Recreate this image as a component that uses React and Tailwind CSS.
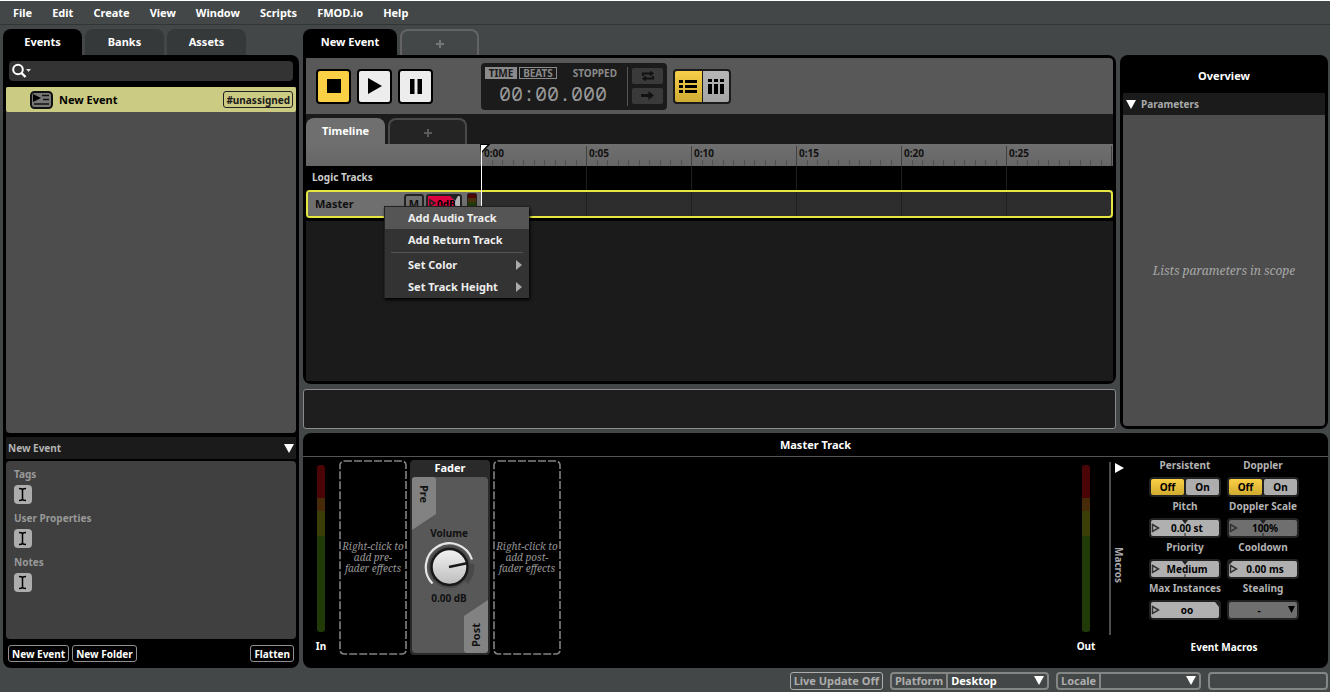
import React from "react";

const MENUS = ["File", "Edit", "Create", "View", "Window", "Scripts", "FMOD.io", "Help"];
const TIMES = ["0:00", "0:05", "0:10", "0:15", "0:20", "0:25"];

function Down({ className = "" }) {
  return (
    <svg className={"pointer-events-none h-[9px] w-[10px] shrink-0 " + className} viewBox="0 0 10 9" aria-hidden="true">
      <path d="M0 0H10L5 9Z" fill="currentColor" />
    </svg>
  );
}

function SideTab({ children, active }) {
  return (
    <button
      type="button"
      className={
        "h-[26px] w-[79px] rounded-t-[8px] text-[11px] leading-[16px] font-bold text-white " +
        (active ? "bg-black" : "bg-[#353939]")
      }
    >
      {children}
    </button>
  );
}

function PlusTab({ className }) {
  return (
    <button
      type="button"
      aria-label="Add tab"
      className={"flex h-[26px] w-[79px] items-center justify-center rounded-t-[8px] border-2 border-b-0 pt-[2px] " + className}
    >
      <svg className="h-2 w-2" viewBox="0 0 8 8">
        <path d="M4 0V8M0 4H8" stroke="currentColor" strokeWidth="2" />
      </svg>
    </button>
  );
}

function Browser() {
  return (
    <aside className="flex w-[296px] shrink-0 flex-col">
      <div className="flex gap-[3px]">
        <SideTab active>Events</SideTab>
        <SideTab>Banks</SideTab>
        <SideTab>Assets</SideTab>
      </div>
      <div className="flex min-h-0 flex-1 flex-col rounded-[8px] rounded-tl-none bg-black px-[3px]">
        <label className="mx-[3px] mt-[6px] flex h-5 shrink-0 items-center rounded-[4px] bg-[#333333] pl-[3px]">
          <svg className="h-4 w-5 shrink-0" viewBox="0 0 20 16" aria-hidden="true">
            <circle cx="6" cy="6.5" r="4.8" fill="none" stroke="#fff" strokeWidth="2" />
            <path d="M9.5 10L13.5 14" stroke="#fff" strokeWidth="2.4" />
            <path d="M14 6H19L16.5 9Z" fill="#ddd" />
          </svg>
          <input type="text" aria-label="Search events" className="min-w-0 flex-1 bg-transparent text-[11px] text-white outline-none" />
        </label>
        <div className="mt-[6px] min-h-0 flex-1 overflow-hidden rounded-b-[4px] bg-[#4d4d4d]">
          <div className="flex h-[25px] items-center rounded-[2px] bg-[#cccb83] pr-[3px] pl-6 text-black">
            <svg className="h-[18px] w-[23px]" viewBox="0 0 23 18" aria-hidden="true">
              <rect x="1" y="1" width="21" height="16" rx="3.5" fill="#777" stroke="#111" strokeWidth="2" />
              <path d="M3 3L11 7L3 11Z" fill="#000" />
              <path d="M12 4.5H19M13 8.5H19M4 13H19" stroke="#111" strokeWidth="1.5" />
            </svg>
            <span className="ml-[6px] flex-1 text-[11px] leading-[16px] font-bold">New Event</span>
            <span className="flex h-[17px] items-center rounded-[3px] border border-[#222] px-[2px] text-[10px] leading-[14px] font-bold text-[#1a1a1a]">
              #unassigned
            </span>
          </div>
        </div>
        <button type="button" className="mt-1 flex h-[22px] shrink-0 items-center justify-between bg-[#1b1b1b] px-[2px] text-[10px] leading-[14px] font-bold text-[#b3b3b3]">
          New Event
          <Down className="text-white" />
        </button>
        <div className="mt-[2px] flex h-[178px] shrink-0 flex-col rounded-[4px] bg-[#404040] px-2 pt-[6px]">
          {["Tags", "User Properties", "Notes"].map((name) => (
            <div key={name} className="flex h-11 flex-col items-start gap-1">
              <label htmlFor={name} className="text-[10px] leading-[14px] font-bold text-[#999999]">
                {name}
              </label>
              <button id={name} type="button" aria-label={"Edit " + name} className="h-[19px] w-[18px] rounded-[4px] bg-[#adadad]">
                <svg viewBox="0 0 18 19" aria-hidden="true">
                  <path d="M5 3.5C7 3.5 8.5 4 8.5 5V14C8.5 15 7 15.5 5 15.5M12 3.5C10 3.5 8.5 4 8.5 5V14C8.5 15 10 15.5 12 15.5" fill="none" stroke="#000" strokeWidth="1.5" />
                </svg>
              </button>
            </div>
          ))}
        </div>
        <div className="flex h-[29px] shrink-0 items-center gap-[3px] px-[2px]">
          <FootButton>New Event</FootButton>
          <FootButton>New Folder</FootButton>
          <span className="flex-1" />
          <FootButton>Flatten</FootButton>
        </div>
      </div>
    </aside>
  );
}

function FootButton({ children }) {
  return (
    <button type="button" className="h-[17px] rounded-[3px] border border-[#909090] px-[3px] text-[10px] leading-[14px] font-bold text-white">
      {children}
    </button>
  );
}

function Transport() {
  const key = "flex size-[35px] items-center justify-center rounded-[4px] border-2 border-black ";
  return (
    <div className="flex h-[56px] shrink-0 items-center rounded-tr-[4px] bg-[#585858] pl-[10px]">
      <div className="flex gap-[6px]">
        <button type="button" aria-label="Stop" className={key + "bg-[#fbd045]"}>
          <svg className="size-[14px]" viewBox="0 0 14 14"><path d="M0 0H14V14H0Z" /></svg>
        </button>
        <button type="button" aria-label="Play" className={key + "bg-[#ededed]"}>
          <svg className="h-4 w-[14px]" viewBox="0 0 14 16"><path d="M0 0L14 8L0 16Z" /></svg>
        </button>
        <button type="button" aria-label="Pause" className={key + "bg-[#ededed]"}>
          <svg className="h-[15px] w-3" viewBox="0 0 12 15"><path d="M0 0H4.5V15H0ZM7.5 0H12V15H7.5Z" /></svg>
        </button>
      </div>
      <div className="ml-12 flex h-[47px] w-[186px] shrink-0 rounded-[4px] bg-[#1b1b1b] p-1">
        <div className="flex w-[142px] flex-col">
          <div className="flex items-center gap-[2px] text-[10px] leading-[10px] font-bold text-[#8a8a8a]">
            <button type="button" className="h-3 w-8 border border-[#8a8a8a] bg-[#8a8a8a] text-[#1b1b1b]">TIME</button>
            <button type="button" className="h-3 w-[38px] border border-[#8a8a8a]">BEATS</button>
            <span className="ml-auto pr-[10px]">STOPPED</span>
          </div>
          <output className="mt-[3px] pl-[14px] font-['Noto_Sans_Mono','Liberation_Mono',monospace] text-[20px] leading-[24px] text-[#999999]">00:00.000</output>
        </div>
        <div className="flex w-9 flex-col gap-1 border-l border-[#555] py-px pl-1 text-[#111]">
          <button type="button" aria-label="Loop playback" className="flex h-4 w-[31px] items-center justify-center rounded-[2px] bg-[#3a3a3a]">
            <svg className="h-3 w-3" viewBox="0 0 12 12">
              <path d="M1 6V3.5H9M11 6V8.5H3" fill="none" stroke="currentColor" strokeWidth="2" />
              <path d="M8 0.5L12 3.5L8 6.5ZM4 5.5L0 8.5L4 11.5Z" fill="currentColor" />
            </svg>
          </button>
          <button type="button" aria-label="Follow playhead" className="flex h-4 w-[31px] items-center justify-center rounded-[2px] bg-[#3a3a3a]">
            <svg className="h-[9px] w-[13px]" viewBox="0 0 13 9"><path d="M0 3H7.5V0L13 4.5L7.5 9V6H0Z" fill="currentColor" /></svg>
          </button>
        </div>
      </div>
      <div className="ml-[6px] flex h-[35px] w-[58px] shrink-0 gap-px rounded-[4px] bg-[#1b1b1b] p-[2px]">
        <button type="button" aria-label="List view" className="flex flex-1 items-center justify-center rounded-l-[2px] bg-linear-to-b from-[#f8cf49] to-[#cfac33]">
          <svg className="h-[13px] w-[18px]" viewBox="0 0 18 13">
            <path d="M0 0H4V3H0ZM6 0H18V3H6ZM0 5H4V8H0ZM6 5H18V8H6ZM0 10H4V13H0ZM6 10H18V13H6Z" />
          </svg>
        </button>
        <button type="button" aria-label="Mixer view" className="flex flex-1 items-center justify-center rounded-r-[2px] bg-linear-to-b from-[#b5b5b5] to-[#a5a5a5]">
          <svg className="h-[15px] w-4" viewBox="0 0 16 15">
            <path d="M0 0H4V3H0ZM6 0H10V3H6ZM12 0H16V3H12ZM0 5H4V15H0ZM6 5H10V15H6ZM12 5H16V15H12Z" />
          </svg>
        </button>
      </div>
    </div>
  );
}

function Cells({ className }) {
  return (
    <div className="flex min-w-0 flex-1 overflow-hidden">
      {TIMES.map((t) => (
        <span key={t} className={"w-[105px] shrink-0 border-l " + className} />
      ))}
    </div>
  );
}

function MenuItem({ children, active, submenu }) {
  return (
    <button
      type="button"
      role="menuitem"
      className={
        "flex h-[22px] w-full items-center justify-between pr-[7px] pl-[23px] text-[11px] leading-[16px] font-bold text-[#eeeeee] " +
        (active ? "bg-[#555555]" : "")
      }
    >
      {children}
      {submenu && (
        <svg className="h-[10px] w-[6px]" viewBox="0 0 6 10" aria-hidden="true"><path d="M0 0L6 5L0 10Z" fill="#aaa" /></svg>
      )}
    </button>
  );
}

function Timeline() {
  return (
    <div className="relative flex min-h-0 flex-1 flex-col bg-[#1b1b1b]">
      <div className="mt-1 flex gap-[3px]">
        <button type="button" className="h-[26px] w-[79px] rounded-t-[8px] bg-[#6f6f6f] text-[11px] leading-[16px] font-bold text-white">Timeline</button>
        <PlusTab className="border-[#4a4a4a] bg-[#242424] text-[#5a5a5a]" />
      </div>
      <div className="flex h-[22px] bg-linear-to-b from-[#6f6f6f] to-[#666666]">
        <div className="w-[175px] shrink-0" />
        <div className="flex min-w-0 flex-1 overflow-hidden pt-[2px]">
          {TIMES.map((t) => (
            <div key={t} className="flex w-[105px] shrink-0 flex-col border-l border-[#404040]">
              <span className="pl-[2px] text-[10px] leading-[14px] font-bold text-[#111]">{t}</span>
              <svg className="h-[6px] w-[104px]" viewBox="0 0 104 6" aria-hidden="true">
                <path d="M10.5 0V6M20.5 0V6M31.5 0V6M41.5 0V6M52.5 0V6M62.5 0V6M73.5 0V6M83.5 0V6M94.5 0V6" stroke="#505050" />
              </svg>
            </div>
          ))}
          <div className="flex-1 border-l border-[#404040]" />
        </div>
      </div>
      <div className="flex h-6 bg-black">
        <div className="w-[175px] shrink-0 pl-[6px] text-[10px] leading-[22px] font-bold text-[#cccccc]">Logic Tracks</div>
        <Cells className="border-[#1e1e1e]" />
      </div>
      <div className="relative flex h-7 rounded-[4px] border-2 border-[#e6e640] bg-[#2d2d2d]">
        <div className="flex w-[173px] shrink-0 rounded-l-[3px] bg-[#6f6f6f] pl-[7px]">
          <span className="w-[89px] text-[11px] leading-[24px] font-bold text-[#111]">Master</span>
          <button type="button" aria-label="Mute" className="mt-[2px] h-5 w-5 rounded-[3px] border-2 border-[#222] bg-[#6f6f6f] text-[11px] leading-[16px] font-bold text-[#111]">M</button>
          <div className="relative mt-[2px] ml-[2px] h-5 w-9 overflow-hidden rounded-[3px] border-2 border-[#222] bg-[#b5b5b5]">
            <svg className="absolute inset-0 h-4 w-8" viewBox="0 0 32 16" aria-hidden="true">
              <path d="M0 0H23L27 6V16H0Z" fill="#dc0140" />
              <path d="M22 0H30L27 5Z" fill="#222" />
              <path d="M2 4L7 7L2 10Z" fill="none" stroke="#222" strokeWidth="1.5" />
            </svg>
            <input aria-label="Track volume" defaultValue="0dB" className="relative block h-4 w-full bg-transparent pl-[9px] text-[10px] leading-[16px] font-bold text-black outline-none" />
          </div>
          <div className="mt-px ml-[5px] flex h-[22px] w-[10px] flex-col rounded-[2px] border border-[#222]">
            <span className="h-1 bg-[#4b0507]" />
            <span className="h-1 bg-[#47300a]" />
            <span className="flex-1 bg-[#203a0a]" />
          </div>
        </div>
        <Cells className="border-[#202020]" />
        <div role="menu" className="absolute top-[14px] left-[76px] z-10 w-[145px] border-t border-l border-[#222] bg-[#333333] shadow-[1px_2px_3px_#000]">
          <MenuItem active>Add Audio Track</MenuItem>
          <MenuItem>Add Return Track</MenuItem>
          <div className="mx-[6px] my-px h-px bg-[#555]" />
          <MenuItem submenu>Set Color</MenuItem>
          <MenuItem submenu>Set Track Height</MenuItem>
        </div>
      </div>
      <div className="h-[3px] bg-black" />
      <svg className="pointer-events-none absolute top-[30px] left-[174px] h-[62px] w-[12px]" viewBox="0 0 12 62" aria-hidden="true">
        <path d="M0 0H10.5L1 10Z" fill="#000" />
        <path d="M1 1H7.5L1 8Z" fill="#fff" />
        <path d="M1.5 1V62" stroke="#fff" />
      </svg>
    </div>
  );
}

function Overview() {
  return (
    <section className="mt-[26px] flex w-[208px] shrink-0 flex-col rounded-[8px] bg-black p-[3px] pt-0">
      <h2 className="h-[38px] pt-[2px] text-center text-[11px] leading-[38px] font-bold text-white">Overview</h2>
      <button type="button" className="flex h-[22px] shrink-0 items-center gap-[5px] bg-[#1b1b1b] px-[3px] text-[10px] leading-[14px] font-bold text-[#aaaaaa]">
        <Down className="text-white" />
        Parameters
      </button>
      <div className="flex flex-1 items-center justify-center rounded-b-[4px] bg-[#4d4d4d] font-['Noto_Serif','DejaVu_Serif_Condensed','DejaVu_Serif',serif] text-[12px] leading-[16px] text-[#a8a8a8] italic">
        Lists parameters in scope
      </div>
    </section>
  );
}

function Meter({ label }) {
  return (
    <div className="flex w-6 shrink-0 flex-col items-center pt-2">
      <div className="flex h-[167px] w-2 flex-col overflow-hidden rounded-[3px]">
        <span className="h-[33px] bg-[#4b0507]" />
        <span className="h-[13px] bg-[#472a08]" />
        <span className="h-[25px] bg-[#3c3e08]" />
        <span className="flex-1 bg-[#203a08]" />
      </div>
      <span className="mt-[7px] text-[10px] leading-[14px] font-bold text-white">{label}</span>
    </div>
  );
}

function DropZone({ children }) {
  return (
    <div className="relative mt-[3px] flex h-[195px] w-[68px] shrink-0 items-center justify-center text-center font-['Noto_Serif','DejaVu_Serif_Condensed','DejaVu_Serif',serif] text-[10px] leading-[11px] text-[#949494] italic">
      <svg className="absolute inset-0 h-full w-full" viewBox="0 0 68 195" aria-hidden="true">
        <rect x="1" y="1" width="66" height="193" rx="4" fill="none" stroke="#828282" strokeWidth="1.6" strokeDasharray="8 2" />
      </svg>
      <p>{children}</p>
    </div>
  );
}

function Fader() {
  return (
    <div className="mt-[3px] flex h-[195px] w-20 shrink-0 flex-col rounded-[4px] bg-[#2a2a2a] p-[2px] pt-0">
      <h3 className="h-[17px] text-center text-[11px] leading-[16px] font-bold text-white">Fader</h3>
      <div className="relative flex flex-1 flex-col items-center rounded-[4px] bg-[#585858] text-[10px] leading-[14px] font-bold text-[#111]">
        <svg className="absolute top-0 left-0 h-[53px] w-6" viewBox="0 0 24 53" aria-hidden="true">
          <path d="M3 0H21Q24 0 24 3V37L0 53V3Q0 0 3 0Z" fill="#828282" />
        </svg>
        <button type="button" className="absolute top-1 left-1 h-[26px] w-4 text-[11px] leading-[16px] [writing-mode:vertical-rl]">Pre</button>
        <svg className="absolute right-0 bottom-0 h-[53px] w-6" viewBox="0 0 24 53" aria-hidden="true">
          <path d="M24 0V50Q24 53 21 53H3Q0 53 0 50V16Z" fill="#828282" />
        </svg>
        <button type="button" className="absolute right-1 bottom-[3px] h-[30px] w-4 rotate-180 text-[11px] leading-[16px] [writing-mode:vertical-rl]">Post</button>
        <div className="mt-[49px] mr-[2px] flex flex-col items-center">
          <span>Volume</span>
          <svg className="h-[51px] w-[52px]" viewBox="0 0 52 51" role="img" aria-label="Volume dial">
            <defs>
              <linearGradient id="dial" x1="0" y1="0" x2="0" y2="1">
                <stop offset="0" stopColor="#f2f2f2" />
                <stop offset="1" stopColor="#bdbdbd" />
              </linearGradient>
            </defs>
            <circle cx="26.5" cy="27" r="21" fill="#484848" />
            <path d="M9.5 43.5A23.7 23.7 0 1 1 49 19.5" fill="none" stroke="#e6e6e6" strokeWidth="2.2" />
            <path d="M48.5 24A22 22 0 0 1 43 42" fill="none" stroke="#484848" strokeWidth="5" />
            <circle cx="26.5" cy="27" r="18" fill="url(#dial)" stroke="#181818" strokeWidth="2.5" />
            <path d="M26 27L45 23" stroke="#181818" strokeWidth="2.5" />
          </svg>
          <output>0.00 dB</output>
        </div>
      </div>
    </div>
  );
}

function Toggle({ label }) {
  return (
    <fieldset className="flex flex-col items-center">
      <legend className="w-full text-center text-[10px] leading-[14px] font-bold text-[#b3b3b3]">{label}</legend>
      <div className="mt-[5px] flex h-5 w-[72px] gap-[2px] rounded-[4px] bg-[#222] p-[2px] text-[10px] leading-[14px] font-bold text-black">
        <button type="button" aria-pressed="true" className="flex-1 rounded-[2px] bg-linear-to-b from-[#fbd045] to-[#d0ab30]">Off</button>
        <button type="button" aria-pressed="false" className="flex-1 rounded-[2px] bg-[#adadad]">On</button>
      </div>
    </fieldset>
  );
}

function NumberBox({ label, value, notch = "", dim }) {
  return (
    <label className="flex flex-col items-center text-[10px] leading-[14px] font-bold whitespace-nowrap text-[#b3b3b3]">
      {label}
      <span className={"relative mt-[5px] h-5 w-[72px] rounded-[4px] border-2 border-[#222] " + (dim ? "bg-[#6f6f6f]" : "bg-[#b0b0b0]")}>
        <svg className="absolute inset-0 h-4 w-[68px]" viewBox="0 0 68 16" aria-hidden="true">
          <path d="M1.5 4.5L7.5 8L1.5 11.5Z" fill="none" stroke="#333" strokeWidth="1.5" />
          <path d={notch} fill="#222" />
        </svg>
        <input defaultValue={value} className="relative block h-4 w-full bg-transparent pl-1 text-center text-black outline-none" />
      </span>
    </label>
  );
}

const MIDDLE = "M31 0H37L34 4ZM33.5 13H34.5V16H33.5Z";

function Deck() {
  return (
    <section className="flex h-[235px] shrink-0 flex-col rounded-[8px] bg-black">
      <h2 className="h-6 border-b border-[#555] text-center text-[11px] leading-[24px] font-bold text-white">Master Track</h2>
      <div className="flex flex-1 pl-[6px]">
        <Meter label="In" />
        <div className="ml-[6px] flex flex-1 gap-[3px]">
          <DropZone>Right-click to<br />add pre-<br />fader effects</DropZone>
          <Fader />
          <DropZone>Right-click to<br />add post-<br />fader effects</DropZone>
        </div>
        <Meter label="Out" />
        <div className="mt-[5px] ml-[11px] h-[173px] w-[2px] bg-[#4d4d4d]" />
        <button type="button" aria-label="Collapse macros" className="ml-1 flex h-[180px] w-4 flex-col items-start pt-[6px]">
          <svg className="h-[10px] w-[9px]" viewBox="0 0 9 10" aria-hidden="true"><path d="M0 0L9 5L0 10Z" fill="#fff" /></svg>
          <span className="mt-[74px] -ml-[3px] text-[10px] leading-[14px] font-bold text-[#aaaaaa] [writing-mode:vertical-rl]">Macros</span>
        </button>
        <div className="mr-[29px] ml-[18px] flex shrink-0 flex-col pt-px">
          <div className="grid grid-cols-[72px_72px] gap-x-[6px] gap-y-[2px]">
            <Toggle label="Persistent" />
            <Toggle label="Doppler" />
            <NumberBox label="Pitch" value="0.00 st" notch={MIDDLE} />
            <NumberBox label="Doppler Scale" value="100%" notch={MIDDLE} dim />
            <NumberBox label="Priority" value="Medium" notch={MIDDLE} />
            <NumberBox label="Cooldown" value="0.00 ms" notch="M0 0H4L0 4Z" />
            <NumberBox label="Max Instances" value="oo" notch="M64 0H68V5Z" />
            <label className="flex flex-col items-center text-[10px] leading-[14px] font-bold text-[#b3b3b3]">
              Stealing
              <span className="relative mt-[5px] h-5 w-[72px] rounded-[4px] border-2 border-[#222] bg-[#6f6f6f]">
                <select className="block h-4 w-full appearance-none bg-transparent pr-2 text-center text-black outline-none">
                  <option>-</option>
                </select>
                <svg className="pointer-events-none absolute top-1 right-[2px] h-[7px] w-[7px]" viewBox="0 0 7 7" aria-hidden="true">
                  <path d="M0 0H7L3.5 7Z" />
                </svg>
              </span>
            </label>
          </div>
          <p className="mt-5 text-center text-[10px] leading-[14px] font-bold text-white">Event Macros</p>
        </div>
      </div>
    </section>
  );
}

function StatusSelect({ label, value, className }) {
  return (
    <label className={"relative flex h-[18px] items-center rounded-[4px] border-2 border-[#848686] " + className}>
      <span className="flex h-full items-center border-r-2 border-[#848686] px-[3px]">{label}</span>
      <select className="h-full min-w-0 flex-1 appearance-none bg-transparent pl-[3px] leading-[14px] text-white outline-none">
        <option>{value}</option>
      </select>
      <Down className="absolute right-[3px] text-white" />
    </label>
  );
}

export default function App() {
  return (
    <div className="flex h-screen min-h-[640px] flex-col border-t border-white bg-[#434747] font-['Noto_Sans',sans-serif] select-none">
      <nav className="flex h-6 shrink-0 items-center gap-5 border-b border-[#323535] pl-[13px] text-[11px] leading-[16px] font-bold text-white">
        {MENUS.map((m) => (
          <button key={m} type="button">{m}</button>
        ))}
      </nav>
      <main className="flex min-h-0 flex-1 gap-1 pt-1 pr-[2px] pl-[3px]">
        <Browser />
        <div className="flex min-w-0 flex-1 flex-col gap-1">
          <div className="flex min-h-0 flex-1 gap-1">
            <div className="flex min-w-0 flex-1 flex-col">
              <div className="flex gap-[3px]">
                <button type="button" className="h-[26px] w-[94px] rounded-t-[8px] bg-black text-[11px] leading-[16px] font-bold text-white">New Event</button>
                <PlusTab className="border-[#636363] text-[#757777]" />
              </div>
              <div className="flex min-h-0 flex-1 flex-col rounded-[8px] rounded-tl-none bg-black p-[3px]">
                <Transport />
                <Timeline />
              </div>
              <div className="mt-[5px] h-10 shrink-0 rounded-[3px] border border-[#8a8a8a] bg-[#1e1e1e]" />
            </div>
            <Overview />
          </div>
          <Deck />
        </div>
      </main>
      <footer className="flex h-6 shrink-0 items-center justify-end gap-[7px] pt-px pr-[2px] text-[11px] leading-[14px] font-bold text-[#adadad]">
        <button type="button" className="h-[18px] rounded-[3px] border border-[#adadad] px-[3px]">Live Update Off</button>
        <StatusSelect label="Platform" value="Desktop" className="w-[159px]" />
        <StatusSelect label="Locale" value="" className="w-[145px]" />
        <div className="h-[18px] w-[120px] rounded-[4px] border-2 border-[#848686]" />
      </footer>
    </div>
  );
}
